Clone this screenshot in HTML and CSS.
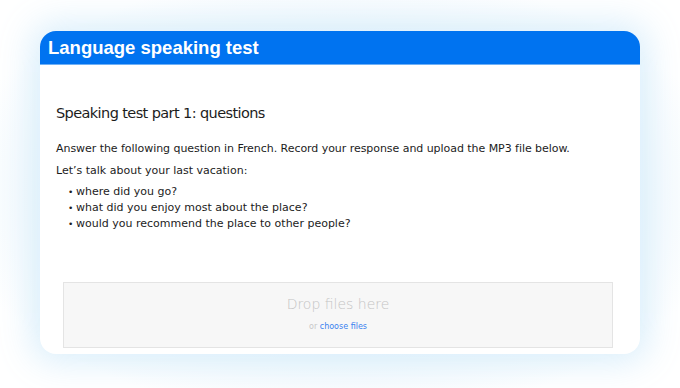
FILE: index.html
```html
<!DOCTYPE html>
<html>

<head>
    <meta name="viewport" content="width=device-width, initial-scale=1">
    <title>Language speaking test</title>
    <meta charset="UTF-8">
    <link rel="stylesheet" href="styles.css">
</head>

<body>

    <div class="page">
        <div class="card">
            <div class="card_header">
                <h1>Language speaking test</h1>
            </div>

            <div class="card_body">
                <h2>Speaking test part 1: questions</h2>
                <p class="intro">Answer the following question in French. Record your response and upload the MP3 file below.</p>
                <p class="lead">Let’s talk about your last vacation:</p>
                <ul class="questions">
                    <li>where did you go?</li>
                    <li>what did you enjoy most about the place?</li>
                    <li>would you recommend the place to other people?</li>
                </ul>

                <div class="dropzone">
                    <span class="drop_title">Drop files here</span>
                    <span class="drop_sub">or <a href="#">choose files</a></span>
                </div>
            </div>
        </div>
    </div>

</body>

</html>
```

FILE: styles.css
```css
body {
    margin: 0;
    background-color: #ffffff;
    font-family: "DejaVu Sans", sans-serif;
    color: #1c1c1c;
}

.page {
    width: 680px;
    height: 388px;
    padding: 31px 40px 0 40px;
    box-sizing: border-box;
    background: radial-gradient(ellipse at center, #e2f1fb 0%, #f0f8fd 55%, #ffffff 82%);
}

/* The card */
.card {
    height: 323px;
    background-color: #fff;
    border-radius: 16px;
    overflow: hidden;
    box-shadow: 0 0 34px 8px rgba(210, 235, 250, 0.85);
    display: flex;
    flex-direction: column;
}

.card_header {
    height: 34px;
    background-color: #0073f0;
    border-bottom: 1px solid #6fb0f5;
    box-sizing: border-box;
    padding: 0 8px;
    display: flex;
    align-items: center;
}

.card_header h1 {
    margin: 0;
    font-family: "Liberation Sans", Arial, sans-serif;
    font-size: 18.5px;
    font-weight: bold;
    color: #fff;
    padding-top: 1px;
}

.card_body {
    flex: 1;
    padding: 0 16px;
    display: flex;
    flex-direction: column;
}

.card_body h2 {
    margin: 38px 0 0 0;
    font-size: 14.5px;
    font-weight: normal;
    line-height: 20px;
    letter-spacing: -0.6px;
}

.intro {
    margin: 18px 0 0 0;
    font-size: 11px;
    line-height: 16px;
    letter-spacing: -0.05px;
}

.lead {
    margin: 6px 0 0 0;
    font-size: 11px;
    line-height: 16px;
}

.questions {
    list-style-type: none;
    padding: 0;
    margin: 5px 0 0 12px;
    font-size: 11px;
    line-height: 16px;
}

.questions li::before {
    content: "•";
    display: inline-block;
    width: 8px;
    font-size: 9px;
}

.dropzone {
    margin: 50px 11px 0 7px;
    height: 66px;
    background-color: #f7f7f7;
    border: 1px solid #e4e4e4;
    box-sizing: border-box;
    display: flex;
    flex-direction: column;
    align-items: center;
    padding-top: 13px;
    gap: 10px;
}

.drop_title {
    font-size: 14px;
    color: #c4c4c4;
    font-weight: 300;
}

.drop_sub {
    font-size: 8px;
    color: #c8c8c8;
}

.drop_sub a {
    color: #3b82f0;
    text-decoration: none;
}
```
